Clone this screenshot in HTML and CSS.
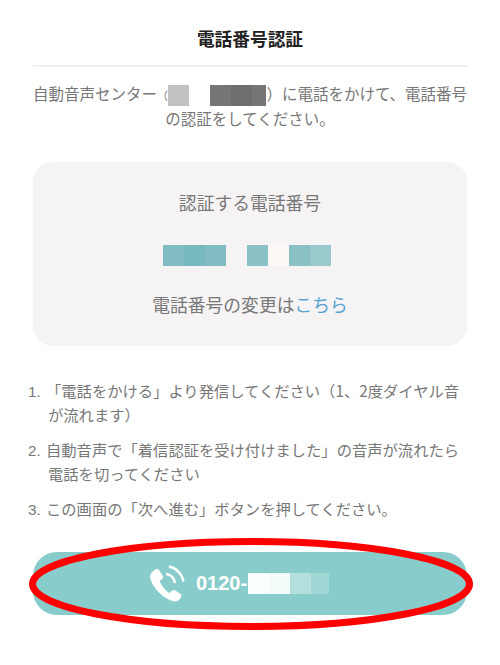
FILE: index.html
```html
<!DOCTYPE html>
<html lang="ja">
<head>
  <meta charset="UTF-8" />
  <meta name="viewport" content="width=device-width, initial-scale=1.0"/>
  <title>電話番号認証</title>
  <link rel="stylesheet" href="styles.css">
</head>
<body>
  <div class="container">
    <div class="header">
      <h1>電話番号認証</h1>
    </div>

    <p class="lead">自動音声センター<span class="paren">（</span><span class="mask"><i class="cell c-light"></i><i class="cell c-none"></i><i class="cell c-dark1"></i><i class="cell c-dark2"></i><i class="cell c-dark1 narrow"></i></span>）に電話をかけて、電話番号<br>の認証をしてください。</p>

    <div class="panel">
      <div class="panel-title">認証する電話番号</div>
      <div class="mask mask-phone">
        <i class="cell c-teal1"></i><i class="cell c-teal2"></i><i class="cell c-teal1"></i><i class="cell c-none"></i><i class="cell c-teal3"></i><i class="cell c-pale"></i><i class="cell c-teal3"></i><i class="cell c-teal4"></i>
      </div>
      <div class="panel-link">電話番号の変更は<a href="#">こちら</a></div>
    </div>

    <ol class="steps">
      <li><span class="num">1.</span>「電話をかける」より発信してください（1、2度ダイヤル音が流れます）</li>
      <li><span class="num">2.</span>自動音声で「着信認証を受け付けました」の音声が流れたら電話を切ってください</li>
      <li><span class="num">3.</span>この画面の「次へ進む」ボタンを押してください。</li>
    </ol>

    <div class="call-wrap">
      <a class="call-btn" href="#">
        <svg class="call-icon" viewBox="0 0 36 38" width="36" height="38" aria-hidden="true">
          <path fill="#fff" d="M5.500 5c1.700-1.400 3.500-1.400 4.600.3l3.500 5.300c.9 1.400.6 2.700-.6 3.700l-1.600 1.300c-.5.400-.6.900-.3 1.500 1.900 4.200 4.600 7.800 8.400 10.500.6.400 1 .4 1.500-.1l1.500-1.600c1.100-1.100 2.500-1.300 3.800-.5l5 3.300c1.500 1 1.600 2.600.5 4l-1.500 1.900c-1.300 1.500-3.300 2.400-5.300 1.800C14 33.500 4 23.200 1.300 13.500.6 10.800 1.400 8.500 3.500 6.700z"/>
          <path fill="none" stroke="#fff" stroke-width="2.400" d="M17 9c4.500.5 8 4 9 9"/>
          <path fill="none" stroke="#fff" stroke-width="2.400" d="M20 1.500c7.500 1.500 13 7.500 14.500 15"/>
        </svg>
        <span class="call-no">0120-</span>
        <span class="mask"><i class="cell c-w1"></i><i class="cell c-w2"></i><i class="cell c-w3"></i><i class="cell c-w4 short"></i></span>
      </a>
      <svg class="ring" viewBox="0 0 444 92" width="444" height="92" aria-hidden="true">
        <ellipse cx="222" cy="46" rx="218.500" ry="42.500" fill="none" stroke="#fe0000" stroke-width="7"/>
      </svg>
    </div>
  </div>
</body>
</html>
```

FILE: styles.css
```css
body {
  font-family: "Noto Sans CJK JP", "Liberation Sans", sans-serif;
  background: #fff;
  color: #777;
  margin: 0;
  padding: 0;
}

.container {
  width: 434px;
  min-height: 639px;
  margin: 0 auto;
  padding-top: 26px;
}

.header {
  height: 39px;
  border-bottom: 2px solid #f0f0f0;
  text-align: center;
}

.header h1 {
  margin: 0;
  font-size: 17.7px;
  line-height: 25px;
  font-weight: 700;
  color: #222;
}

.lead {
  margin: 14px -2px 0;
  font-size: 15.5px;
  line-height: 25px;
  text-align: center;
}

.paren {
  font-size: 11px;
  line-height: 1;
}

.mask {
  display: inline-flex;
  vertical-align: middle;
}

.lead .mask {
  margin: -4px 0 -4px 0.5px;
}

.cell {
  display: block;
  width: 21px;
  height: 21px;
}

.cell.narrow {
  width: 14px;
}

.cell.short {
  width: 18px;
}

.c-light { background: #c1c1c1; }
.c-none { background: transparent; }
.c-dark1 { background: #767676; }
.c-dark2 { background: #6e6e6e; }
.c-teal1 { background: #80bcc2; }
.c-teal2 { background: #78b9c0; }
.c-teal3 { background: #89c1c5; }
.c-teal4 { background: #9ac9cb; }
.c-pale { background: #fdf7f5; }
.c-w1 { background: #fbffff; }
.c-w2 { background: #f4fbfb; }
.c-w3 { background: #b3dfdc; }
.c-w4 { background: #a0d6d4; }

.panel {
  margin-top: 31px;
  height: 184px;
  background: #f5f3f4;
  border-radius: 20px;
  text-align: center;
  display: flex;
  flex-direction: column;
  align-items: center;
}

.panel-title {
  margin-top: 27px;
  font-size: 17.8px;
  line-height: 26px;
}

.mask-phone {
  display: flex;
  margin-top: 30px;
  margin-right: 6px;
}

.panel-link {
  margin-top: 25px;
  font-size: 17.8px;
  line-height: 26px;
}

.panel-link a {
  color: #5ba3d3;
  text-decoration: none;
}

.steps {
  list-style: none;
  margin: 32px 0 0;
  padding: 0;
  font-size: 15.3px;
  line-height: 24px;
}

.steps li {
  padding-left: 15px;
  text-indent: -20px;
  margin-bottom: 11px;
}

.steps .num {
  display: inline-block;
  width: 18px;
  text-indent: 0;
  line-height: 1;
  font-family: "Liberation Sans", sans-serif;
  font-size: 15.3px;
}

.call-wrap {
  position: relative;
  margin-top: 32px;
}

.call-btn {
  display: flex;
  align-items: center;
  height: 63px;
  padding-left: 116px;
  background: #88cccb;
  border-radius: 24px;
  color: #fff;
  text-decoration: none;
}

.call-icon {
  flex: none;
}

.call-no {
  margin-left: 11px;
  font-family: "Liberation Sans", sans-serif;
  font-size: 20px;
  font-weight: 700;
}

.call-btn .mask {
  margin-left: 1px;
}

.ring {
  position: absolute;
  left: -4px;
  top: -14px;
}
```
